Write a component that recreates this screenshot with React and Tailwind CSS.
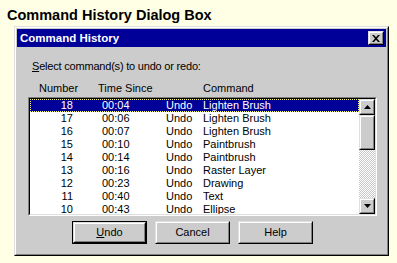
import React from 'react';

const rows = [
  ['18', '00:04', 'Lighten Brush'],
  ['17', '00:06', 'Lighten Brush'],
  ['16', '00:07', 'Lighten Brush'],
  ['15', '00:10', 'Paintbrush'],
  ['14', '00:14', 'Paintbrush'],
  ['13', '00:16', 'Raster Layer'],
  ['12', '00:23', 'Drawing'],
  ['11', '00:40', 'Text'],
  ['10', '00:43', 'Ellipse'],
];

// classic raised 3d frame
const Raised = ({ className = '', inner = '', children }) => (
  <div className={`border border-t-[#dfdfdf] border-l-[#dfdfdf] border-r-black border-b-black ${className}`}>
    <div className={`h-full border border-t-white border-l-white border-r-[#808080] border-b-[#808080] bg-[#cccccc] ${inner}`}>
      {children}
    </div>
  </div>
);

const Arrow = ({ up }) => (
  <svg width="7" height="4" viewBox="0 0 7 4">
    <path d={up ? 'M3.5 0 L7 4 L0 4 Z' : 'M0 0 L7 0 L3.5 4 Z'} fill="black" />
  </svg>
);

const Button = ({ children, def }) => (
  <div className={`w-[75px] h-[23px] ${def ? 'border border-black' : ''}`}>
    <Raised className="h-full" inner="flex items-center justify-center text-black">
      {children}
    </Raised>
  </div>
);

export default function App() {
  return (
    <div className="w-[397px] h-[263px] bg-[#ffffe6] pt-[6px] pl-[7px] overflow-hidden" style={{ fontFamily: '"Liberation Sans", Arial, sans-serif' }}>
      <h1 className="text-[14.5px] font-bold leading-[18px] text-black">Command History Dialog Box</h1>

      <Raised className="ml-[7px] mt-[2px] w-[375px] h-[230px]" inner="p-px flex flex-col text-[11px] leading-[13px] text-black">
        {/* title bar */}
        <div className="h-[18px] bg-[#000099] flex items-center justify-between pl-[3px] pr-[2px]">
          <span className="text-white font-bold text-[11.5px]">Command History</span>
          <Raised className="w-[16px] h-[14px]" inner="flex items-center justify-center">
            <svg width="8" height="7" viewBox="0 0 8 7">
              <path d="M0 0 L2 0 L4 2.3 L6 0 L8 0 L5 3.5 L8 7 L6 7 L4 4.7 L2 7 L0 7 L3 3.5 Z" fill="black" />
            </svg>
          </Raised>
        </div>

        <div className="pl-[11px] pr-[9px] pt-[13px]">
          <div className="pl-[4px] tracking-[-0.2px]"><span className="underline">S</span>elect command(s) to undo or redo:</div>

          {/* column headers */}
          <div className="flex mt-[9px]">
            <span className="ml-[11px] w-[59px]">Number</span>
            <span className="w-[105px]">Time Since</span>
            <span>Command</span>
          </div>

          {/* list box */}
          <div className="mt-[2px] h-[119px] w-[349px] border border-t-[#808080] border-l-[#808080] border-r-white border-b-white">
            <div className="h-full border border-t-black border-l-black border-r-[#dfdfdf] border-b-[#dfdfdf] bg-white flex">
              <div className="flex-1 overflow-hidden">
                {rows.map(([n, t, c], i) => (
                  <div
                    key={n}
                    className={`h-[13px] flex items-center border border-dotted ${i === 0 ? 'bg-[#000099] text-white border-[#ffff88]' : 'border-transparent'}`}
                  >
                    <span className="w-[42px] text-right">{n}</span>
                    <span className="ml-[29px] w-[64px]">{t}</span>
                    <span className="w-[37px]">Undo</span>
                    <span>{c}</span>
                  </div>
                ))}
              </div>
              {/* scrollbar */}
              <div className="w-[16px] flex flex-col bg-[repeating-conic-gradient(#c8c8c8_0_25%,#ffffff_0_50%)] bg-[length:2px_2px]">
                <Raised className="h-[16px]" inner="flex items-center justify-center"><Arrow up /></Raised>
                <Raised className="h-[35px]" />
                <div className="flex-1" />
                <Raised className="h-[16px]" inner="flex items-center justify-center"><Arrow /></Raised>
              </div>
            </div>
          </div>

          {/* buttons */}
          <div className="flex gap-[8px] mt-[5px] ml-[44px]">
            <Button def><span className="underline">U</span>ndo</Button>
            <Button>Cancel</Button>
            <Button>Help</Button>
          </div>
        </div>
      </Raised>
    </div>
  );
}
